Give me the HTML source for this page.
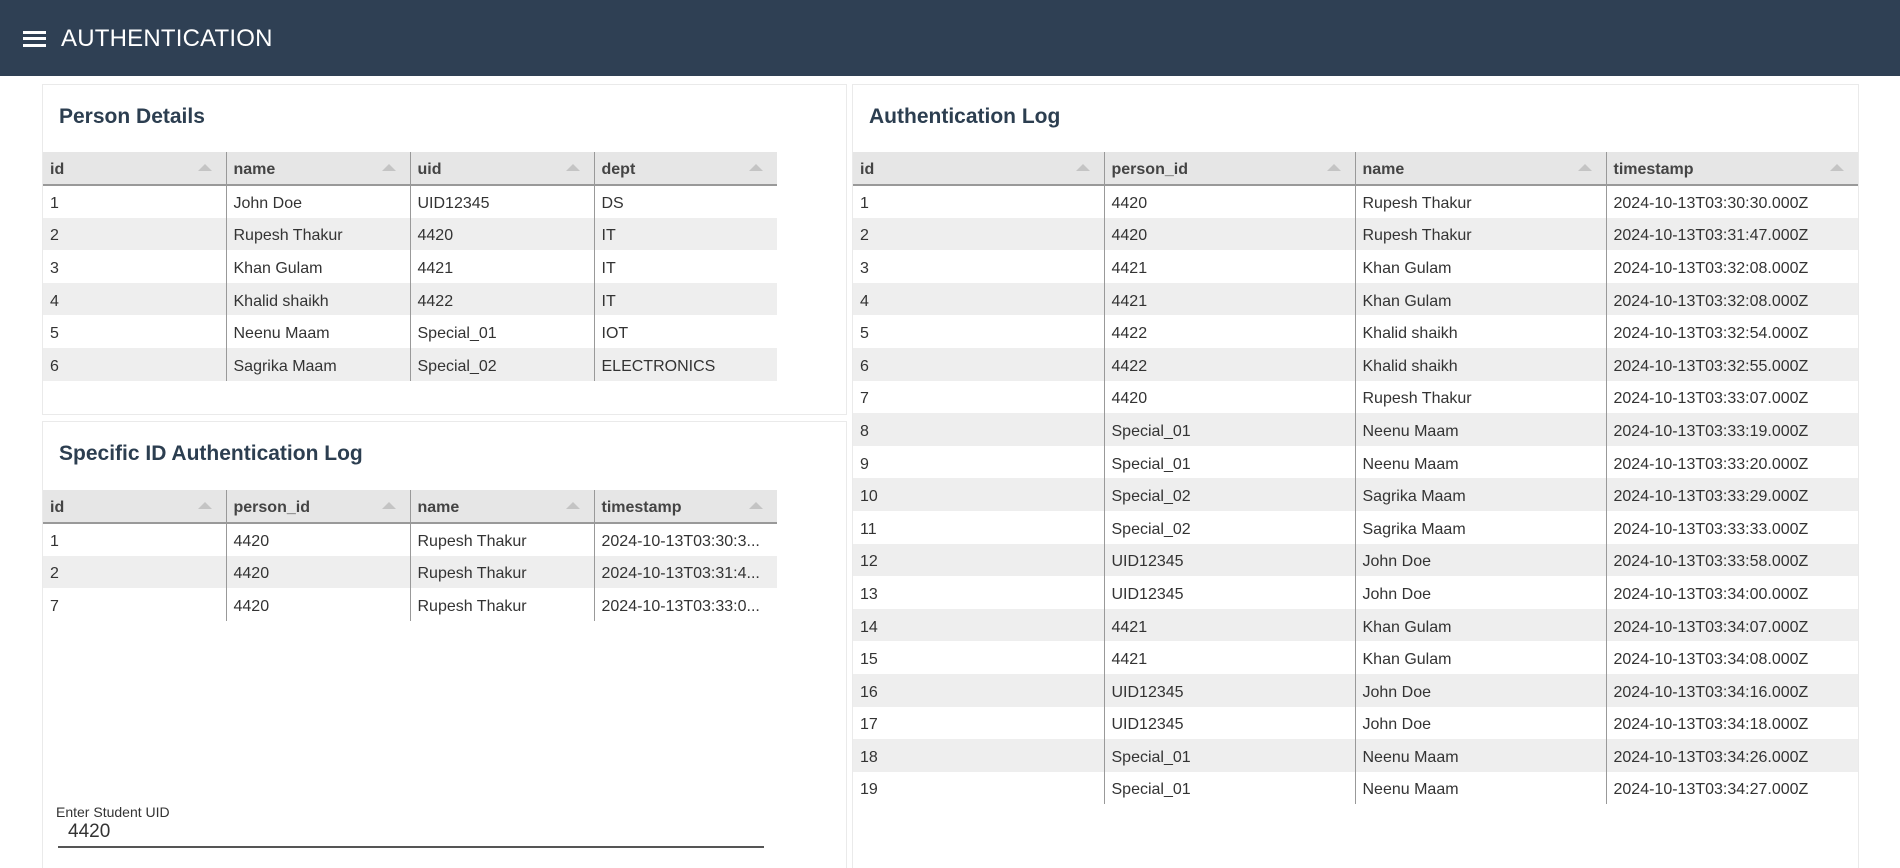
<!DOCTYPE html>
<html><head><meta charset="utf-8"><style>
*{margin:0;padding:0;box-sizing:border-box}
html,body{width:1900px;height:868px;overflow:hidden}
body{background:#fff;font-family:"Liberation Sans",sans-serif;color:#333;position:relative}
.hdr{position:absolute;left:0;top:0;width:1900px;height:76px;background:#2f4054}
.hdr .ham{position:absolute;left:23px;width:23px;height:3px;background:#fff}
.hdr .t{position:absolute;left:61px;top:25px;font-size:24px;color:#fff;letter-spacing:0.2px}
.panel{position:absolute;border:1px solid #eaeaea;background:#fff}
.ptitle{position:absolute;font-size:21px;font-weight:bold;color:#2c3e50}
table{position:absolute;border-collapse:collapse;table-layout:fixed;font-size:16px}
tr{height:32.6px}
tr.h{height:33px}
th{background:#e6e6e6;text-align:left;font-weight:bold;padding:4px 7px 0;border-bottom:2px solid #999;border-left:1px solid #999;position:relative;color:#444}
th:first-child{border-left:none}
th .a{position:absolute;right:14px;top:12px;width:0;height:0;border-left:7px solid transparent;border-right:7px solid transparent;border-bottom:7px solid #c4c4c4}
td{padding:5px 7px 0;border-left:1px solid #999;white-space:nowrap;overflow:hidden}
td:first-child{border-left:none}
tr:nth-child(odd) td{background:#eee}
</style></head><body>
<div class="hdr">
<div class="ham" style="top:31px"></div><div class="ham" style="top:37px"></div><div class="ham" style="top:44px"></div>
<div class="t">AUTHENTICATION</div>
</div>

<div class="panel" style="left:42px;top:84px;width:805px;height:331px"></div>
<div class="ptitle" style="left:59px;top:105px">Person Details</div>
<table style="left:43px;top:152px;width:734px">
<colgroup><col style="width:183px"><col style="width:184px"><col style="width:184px"><col style="width:183px"></colgroup>
<tr class="h"><th>id<span class="a"></span></th><th>name<span class="a"></span></th><th>uid<span class="a"></span></th><th>dept<span class="a"></span></th></tr>
<tr><td>1</td><td>John Doe</td><td>UID12345</td><td>DS</td></tr>
<tr><td>2</td><td>Rupesh Thakur</td><td>4420</td><td>IT</td></tr>
<tr><td>3</td><td>Khan Gulam</td><td>4421</td><td>IT</td></tr>
<tr><td>4</td><td>Khalid shaikh</td><td>4422</td><td>IT</td></tr>
<tr><td>5</td><td>Neenu Maam</td><td>Special_01</td><td>IOT</td></tr>
<tr><td>6</td><td>Sagrika Maam</td><td>Special_02</td><td>ELECTRONICS</td></tr>
</table>

<div class="panel" style="left:42px;top:421px;width:805px;height:460px"></div>
<div class="ptitle" style="left:59px;top:442px">Specific ID Authentication Log</div>
<table style="left:43px;top:490px;width:734px">
<colgroup><col style="width:183px"><col style="width:184px"><col style="width:184px"><col style="width:183px"></colgroup>
<tr class="h"><th>id<span class="a"></span></th><th>person_id<span class="a"></span></th><th>name<span class="a"></span></th><th>timestamp<span class="a"></span></th></tr>
<tr><td>1</td><td>4420</td><td>Rupesh Thakur</td><td>2024-10-13T03:30:3...</td></tr>
<tr><td>2</td><td>4420</td><td>Rupesh Thakur</td><td>2024-10-13T03:31:4...</td></tr>
<tr><td>7</td><td>4420</td><td>Rupesh Thakur</td><td>2024-10-13T03:33:0...</td></tr>
</table>
<div style="position:absolute;left:56px;top:804px;font-size:14px;color:#333">Enter Student UID</div>
<div style="position:absolute;left:68px;top:821px;font-size:19px;color:#333">4420</div>
<div style="position:absolute;left:58px;top:846px;width:706px;height:2px;background:#555"></div>

<div class="panel" style="left:852px;top:84px;width:1007px;height:800px"></div>
<div class="ptitle" style="left:869px;top:105px">Authentication Log</div>
<table style="left:853px;top:152px;width:1005px">
<colgroup><col style="width:251px"><col style="width:251px"><col style="width:251px"><col style="width:252px"></colgroup>
<tr class="h"><th>id<span class="a"></span></th><th>person_id<span class="a"></span></th><th>name<span class="a"></span></th><th>timestamp<span class="a"></span></th></tr>
<tr><td>1</td><td>4420</td><td>Rupesh Thakur</td><td>2024-10-13T03:30:30.000Z</td></tr>
<tr><td>2</td><td>4420</td><td>Rupesh Thakur</td><td>2024-10-13T03:31:47.000Z</td></tr>
<tr><td>3</td><td>4421</td><td>Khan Gulam</td><td>2024-10-13T03:32:08.000Z</td></tr>
<tr><td>4</td><td>4421</td><td>Khan Gulam</td><td>2024-10-13T03:32:08.000Z</td></tr>
<tr><td>5</td><td>4422</td><td>Khalid shaikh</td><td>2024-10-13T03:32:54.000Z</td></tr>
<tr><td>6</td><td>4422</td><td>Khalid shaikh</td><td>2024-10-13T03:32:55.000Z</td></tr>
<tr><td>7</td><td>4420</td><td>Rupesh Thakur</td><td>2024-10-13T03:33:07.000Z</td></tr>
<tr><td>8</td><td>Special_01</td><td>Neenu Maam</td><td>2024-10-13T03:33:19.000Z</td></tr>
<tr><td>9</td><td>Special_01</td><td>Neenu Maam</td><td>2024-10-13T03:33:20.000Z</td></tr>
<tr><td>10</td><td>Special_02</td><td>Sagrika Maam</td><td>2024-10-13T03:33:29.000Z</td></tr>
<tr><td>11</td><td>Special_02</td><td>Sagrika Maam</td><td>2024-10-13T03:33:33.000Z</td></tr>
<tr><td>12</td><td>UID12345</td><td>John Doe</td><td>2024-10-13T03:33:58.000Z</td></tr>
<tr><td>13</td><td>UID12345</td><td>John Doe</td><td>2024-10-13T03:34:00.000Z</td></tr>
<tr><td>14</td><td>4421</td><td>Khan Gulam</td><td>2024-10-13T03:34:07.000Z</td></tr>
<tr><td>15</td><td>4421</td><td>Khan Gulam</td><td>2024-10-13T03:34:08.000Z</td></tr>
<tr><td>16</td><td>UID12345</td><td>John Doe</td><td>2024-10-13T03:34:16.000Z</td></tr>
<tr><td>17</td><td>UID12345</td><td>John Doe</td><td>2024-10-13T03:34:18.000Z</td></tr>
<tr><td>18</td><td>Special_01</td><td>Neenu Maam</td><td>2024-10-13T03:34:26.000Z</td></tr>
<tr><td>19</td><td>Special_01</td><td>Neenu Maam</td><td>2024-10-13T03:34:27.000Z</td></tr>
</table>
</body></html>
